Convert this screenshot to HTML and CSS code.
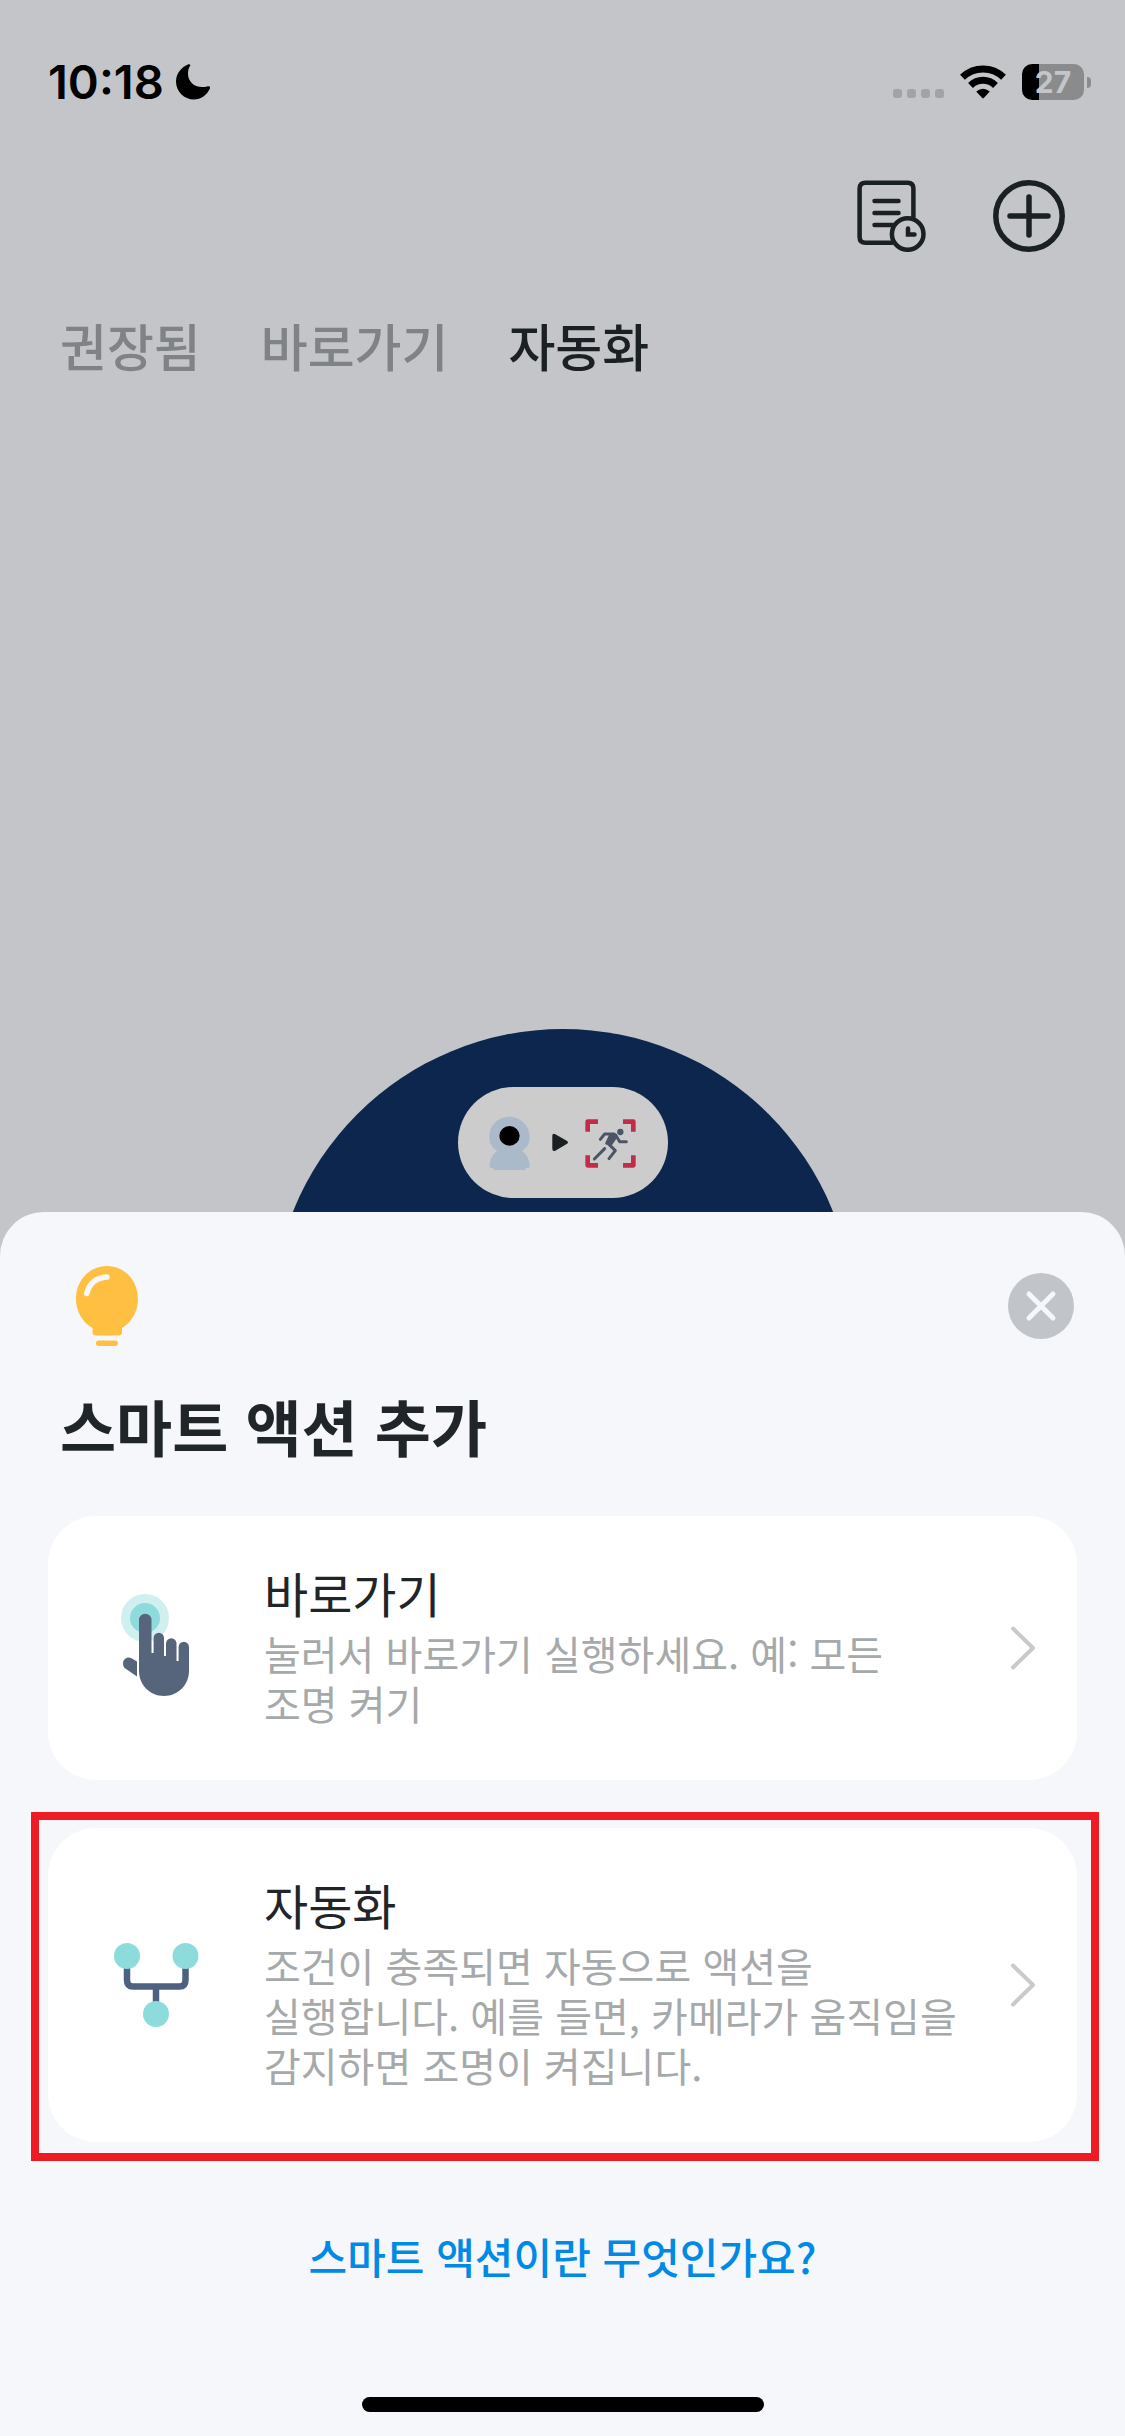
FILE: index.html
```html
<!DOCTYPE html>
<html lang="ko">
<head>
<meta charset="utf-8">
<meta name="viewport" content="width=device-width, initial-scale=1">
<title>스마트 액션</title>
<link rel="stylesheet" href="styles.css">
</head>
<body>
<div class="status-bar">
  <div class="status-left">
    <span class="clock">10:18</span>
    <svg class="moon" viewBox="0 0 34 36" width="34" height="36" aria-hidden="true"><path d="M14.300 1C13.800.2 12.800.2 11.900.6C5 3.500 0 10.200 0 17.500C0 27.500 8 35.500 18 35.500C25 35.500 31 31 33.900 24.500C34.600 22.900 33.700 21.900 32 22.300C30 22.900 28 23.100 26 23.100C18 23.100 12 17.500 12 9.500C12 7 12.500 4.500 13.700 2.500C14.200 1.800 14.500 1.400 14.300 1Z"/></svg>
  </div>
  <div class="status-right">
    <svg class="signal" viewBox="0 0 51 9" width="51" height="9" aria-hidden="true"><rect width="9" height="9" rx="3"/><rect x="14" width="9" height="9" rx="3"/><rect x="28" width="9" height="9" rx="3"/><rect x="42" width="9" height="9" rx="3"/></svg>
    <svg class="wifi" viewBox="0 0 46 34" width="46" height="34" aria-hidden="true"><g fill="none" stroke="#000" stroke-width="7"><path d="M2.500 12.200A29.500 29.500 0 0 1 43.500 12.200"/><path d="M10.500 20.400A18 18 0 0 1 35.500 20.400"/></g><path d="M16.200 26.500Q23 20.800 29.800 26.500L24 32.800Q23 33.800 22 32.800Z"/></svg>
    <div class="battery"><span class="battery-body">27</span><span class="battery-tip"></span></div>
  </div>
</div>

<header class="toolbar">
  <button class="icon-button" type="button" aria-label="기록">
    <svg viewBox="0 0 72 72" width="72" height="72" aria-hidden="true"><g fill="none" stroke="#1a2023" stroke-width="4.500" stroke-linecap="round"><path d="M35 62.800H8.500Q2.600 62.800 2.600 57V8.500Q2.600 2.700 8.500 2.700H50.500Q56.400 2.700 56.400 8.500V37"/><path d="M17.500 21H41.500M17.500 33H41.500M17.500 45H36"/><circle cx="50.700" cy="54" r="15.800"/><path d="M51 48.500V54.500H57.500"/></g></svg>
  </button>
  <button class="icon-button" type="button" aria-label="추가">
    <svg viewBox="0 0 72 72" width="72" height="72" aria-hidden="true"><g fill="none" stroke="#1a2023" stroke-width="5.500" stroke-linecap="round"><circle cx="36" cy="36" r="33.200"/><path d="M36 17V55M17 36H55"/></g></svg>
  </button>
</header>

<nav class="tabs">
  <a class="tab" href="#recommended">권장됨</a>
  <a class="tab" href="#shortcuts">바로가기</a>
  <a class="tab tab-active" href="#automation" aria-current="page">자동화</a>
</nav>

<main class="hero">
  <div class="hero-circle">
    <svg class="hero-pill" viewBox="54 51 630 333" width="210" height="111" aria-hidden="true">
      <path fill="#abbaca" d="M208 140C242 140 269 167 269 200C269 220 260 234 246 242C260 252 269 270 269 286V289Q269 294 264 294H258Q258 300 252 300H165Q159 300 159 294H153Q149 294 149 289V286C149 270 158 252 172 242C157 234 148 220 148 200C148 167 174 140 208 140Z"/>
      <ellipse cx="208.500" cy="197.500" rx="30.500" ry="29.500"/>
      <path fill="#1a1f21" d="M337 198Q337 188 346 193L380 212Q388 217 380 222L346 242Q337 246 337 236Z"/>
      <g fill="none" stroke="#c52a49" stroke-width="14" stroke-linejoin="round"><path d="M474 155H443V185M549 155H580V185M443 256V286H474M580 256V286H549"/></g>
      <g fill="none" stroke="#4a5567" stroke-width="9" stroke-linecap="round" stroke-linejoin="round"><circle cx="541" cy="186" r="9.500" fill="#4a5567" stroke="none"/><path d="M481 208L494 192H522"/><path d="M527 195L539 215H559"/><path d="M494 236L463 267"/><path d="M507 223L526 242L507 266"/><path fill="#4a5567" d="M512 195H525L528 200L513 222L500 220Z"/></g>
    </svg>
  </div>
</main>

<section class="sheet" role="dialog" aria-labelledby="sheet-title">
  <div class="sheet-top">
    <svg class="bulb" viewBox="0 0 62 80" width="62" height="80" aria-hidden="true"><path fill="#ffc042" d="M31 0C49 0 62 15 62 33C62 45 56 56 46 62V66Q46 69.500 42.500 69.500H20Q16.500 69.500 16.500 66V62C6 56 0 45 0 33C0 15 13 0 31 0Z"/><rect x="20" y="74.500" width="22" height="5.500" rx="2.700" fill="#ffc042"/><path d="M10.800 27.500Q14.500 12 31 11" fill="none" stroke="#f6f7fb" stroke-width="5.500" stroke-linecap="round"/></svg>
    <button class="close" type="button" aria-label="닫기">
      <svg viewBox="0 0 66 66" width="66" height="66" aria-hidden="true"><path d="M21 21L45 45M45 21L21 45" fill="none" stroke="#f6f7fb" stroke-width="5" stroke-linecap="round"/></svg>
    </button>
  </div>
  <h1 class="sheet-title" id="sheet-title">스마트 액션 추가</h1>

  <div class="options">
    <button class="card" type="button">
      <svg class="card-icon" viewBox="0 0 120 120" width="120" height="120" aria-hidden="true"><circle cx="49" cy="30" r="24" fill="#d0f0f0"/><circle cx="49" cy="30" r="15" fill="#8ddbdb"/><g fill="#57657c"><path d="M43 32A6.200 6.200 0 0 1 55.500 32V65H57.600V50A5.200 5.200 0 0 1 68 50V68H70V55.500A5.200 5.200 0 0 1 80.500 55.500V73H82.600V59A5.200 5.200 0 0 1 93 59V83C93 97 82 108 68 108C54 108 43 97 43 83Z"/><path d="M41 73.500L35.500 70.200C31.500 68.200 27 71 27 75.500Q27 79 30 81L41 88.500Z"/></g></svg>
      <span class="card-text"><span class="card-title">바로가기</span><span class="card-desc">눌러서 바로가기 실행하세요. 예: 모든 조명 켜기</span></span>
      <svg class="chevron" viewBox="0 0 24 44" width="24" height="44" aria-hidden="true"><path d="M2 2.500L22 22L2 41.500" fill="none" stroke="#c9cacc" stroke-width="4" stroke-linecap="round" stroke-linejoin="round"/></svg>
    </button>
    <button class="card card-marked" type="button">
      <svg class="card-icon" viewBox="0 0 120 120" width="120" height="120" aria-hidden="true"><path d="M31 30V55Q31 61.500 37 61.500H83.500Q89.500 61.500 89.500 55V30M60 61.500V85" fill="none" stroke="#4f6180" stroke-width="6.500"/><g fill="#8ddbdb"><circle cx="31" cy="31" r="13"/><circle cx="89.500" cy="31" r="13"/><circle cx="60" cy="89" r="13"/></g></svg>
      <span class="card-text"><span class="card-title">자동화</span><span class="card-desc">조건이 충족되면 자동으로 액션을 실행합니다. 예를 들면, 카메라가 움직임을 감지하면 조명이 켜집니다.</span></span>
      <svg class="chevron" viewBox="0 0 24 44" width="24" height="44" aria-hidden="true"><path d="M2 2.500L22 22L2 41.500" fill="none" stroke="#c9cacc" stroke-width="4" stroke-linecap="round" stroke-linejoin="round"/></svg>
    </button>
  </div>

  <a class="help-link" href="#help">스마트 액션이란 무엇인가요?</a>
  <div class="home-indicator"></div>
</section>
</body>
</html>
```
FILE: styles.css
```css
* {
  box-sizing: border-box;
}

body {
  margin: 0;
  min-height: 100vh;
  background: #c4c5c9;
  color: #1f2528;
  font-family: "Noto Sans CJK KR", sans-serif;
  overflow-x: hidden;
}

button {
  margin: 0;
  padding: 0;
  border: 0;
  background: none;
  color: inherit;
  font: inherit;
  text-align: left;
  cursor: pointer;
}

svg {
  display: block;
  flex: none;
}

/* Status bar */
.status-bar {
  display: flex;
  justify-content: space-between;
  align-items: center;
  height: 164px;
  padding: 0 34px 0 48px;
  color: #000;
  font-family: Inter, sans-serif;
}

.status-left,
.status-right {
  display: flex;
  align-items: center;
}

.status-left {
  gap: 12px;
}

.status-right {
  gap: 16px;
}

.clock {
  font-size: 47px;
  font-weight: 600;
  line-height: 56px;
}

.signal {
  align-self: flex-end;
  margin-bottom: 2px;
  fill: #a2a3a5;
}

.battery {
  display: flex;
  align-items: center;
  gap: 3px;
}

.battery-body {
  width: 62px;
  height: 36px;
  border-radius: 10px;
  background: linear-gradient(90deg, #000 17px, #8a8b8d 17px);
  color: #c4c5c9;
  font-size: 30px;
  font-weight: 700;
  line-height: 36px;
  text-align: center;
}

.battery-tip {
  width: 4px;
  height: 11px;
  border-radius: 0 4px 4px 0;
  background: #8a8b8d;
}

/* Toolbar and tabs */
.toolbar {
  display: flex;
  justify-content: flex-end;
  gap: 64px;
  padding: 16px 60px 0;
}

.tabs {
  display: flex;
  gap: 60px;
  padding: 57px 60px 0;
}

.tab {
  color: #7f8386;
  font-size: 51px;
  font-weight: 500;
  line-height: 72px;
  text-decoration: none;
}

.tab-active {
  color: #1a2023;
}

/* Illustration */
.hero {
  display: flex;
  justify-content: center;
  padding-top: 648px;
}

.hero-circle {
  width: 582px;
  height: 582px;
  padding-top: 58px;
  border-radius: 50%;
  background: #0c264d;
}

.hero-pill {
  margin: 0 auto;
  border-radius: 56px;
  background: #ccc;
}

/* Bottom sheet */
.sheet {
  position: fixed;
  right: 0;
  bottom: 0;
  left: 0;
  display: flex;
  flex-direction: column;
  padding: 54px 48px 24px;
  border-radius: 44px 44px 0 0;
  background: #f6f7fb;
}

.sheet-top {
  display: flex;
  justify-content: space-between;
  align-items: center;
  padding: 0 3px 0 28px;
}

.close {
  border-radius: 50%;
  background: #c1c4c8;
}

.sheet-title {
  margin: 32px 12px 42px;
  font-size: 61px;
  font-weight: 700;
  line-height: 96px;
}

.options {
  display: flex;
  flex-direction: column;
  gap: 48px;
}

.card {
  position: relative;
  display: flex;
  align-items: center;
  padding: 48px 42px 48px 48px;
  border-radius: 48px;
  background: #fff;
}

/* Red callout frame around the highlighted option */
.card-marked::after {
  content: "";
  position: absolute;
  inset: -16px -22px -19px -17px;
  border: 8px solid #ed1c24;
  pointer-events: none;
}

.card-text {
  display: flex;
  flex: 1;
  flex-direction: column;
  gap: 8px;
  margin: 0 54px 0 48px;
  padding-bottom: 4px;
  word-break: keep-all;
}

.card-title {
  font-size: 48px;
  line-height: 56px;
}

.card-desc {
  color: #a6a9aa;
  font-size: 40px;
  line-height: 50px;
}

.help-link {
  align-self: center;
  margin-top: 84px;
  color: #008ae6;
  font-size: 42px;
  font-weight: 500;
  line-height: 60px;
  text-decoration: none;
}

.home-indicator {
  align-self: center;
  width: 402px;
  height: 15px;
  margin-top: 111px;
  border-radius: 8px;
  background: #000;
}
```
